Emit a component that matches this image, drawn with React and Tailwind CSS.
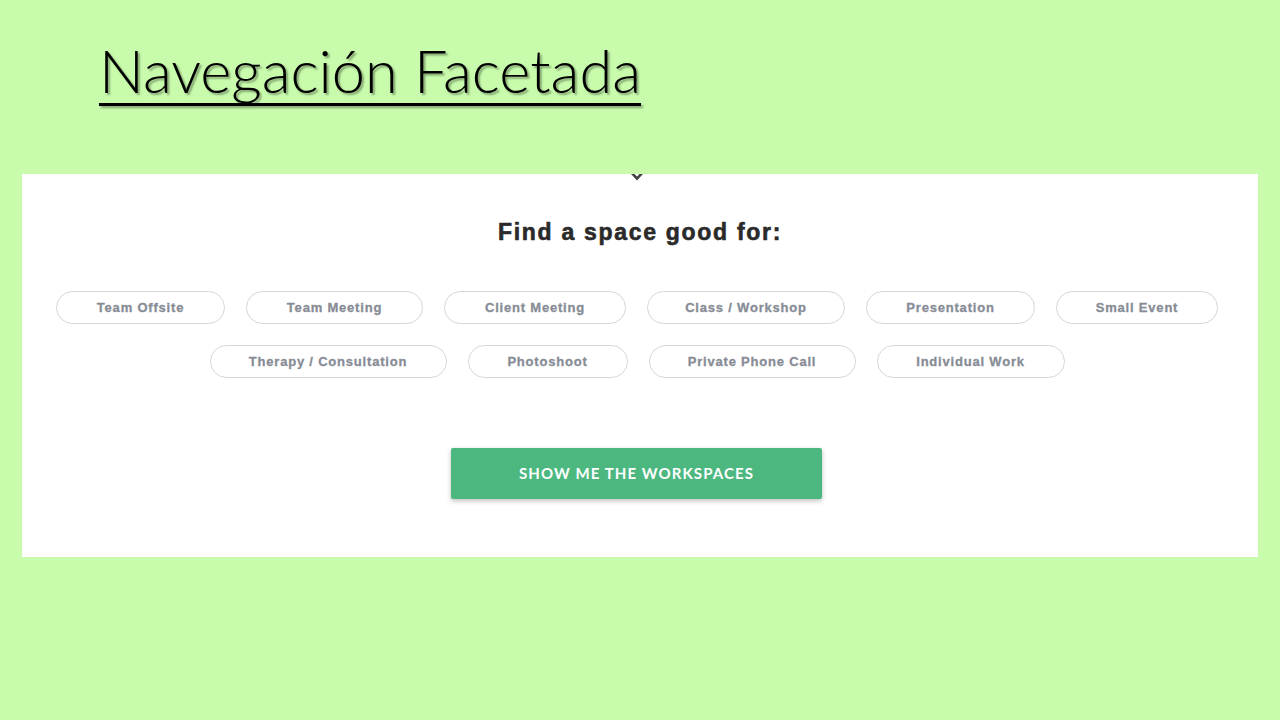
const rowOne = [
    { label: "Team Offsite", w: "w-[169px]" },
    { label: "Team Meeting", w: "w-[177px]" },
    { label: "Client Meeting", w: "w-[182px]" },
    { label: "Class / Workshop", w: "w-[198px]" },
    { label: "Presentation", w: "w-[169px]" },
    { label: "Small Event", w: "w-[162px]" },
];

const rowTwo = [
    { label: "Therapy / Consultation", w: "w-[237px]" },
    { label: "Photoshoot", w: "w-[160px]" },
    { label: "Private Phone Call", w: "w-[207px]" },
    { label: "Individual Work", w: "w-[188px]" },
];

function Pill({ label, w }) {
    return (
        <button
            className={`${w} h-[33px] rounded-full border border-[#d4d6d9] bg-white text-[13px] font-bold tracking-[0.8px] text-[#878c96] [-webkit-text-stroke:0.3px_#878c96] font-['Liberation_Sans',Arial,sans-serif]`}
        >
            {label}
        </button>
    );
}

export default function App() {
    return (
        <div className="w-[1280px] h-[720px] bg-[#c8fcac] overflow-hidden">
            {/* Slide title */}
            <div className="pl-[99px] pt-[38px] h-[174px]">
                <h1 className="inline-block font-['Lato',sans-serif] font-light text-[59.5px] leading-[64px] text-black underline decoration-[3px] underline-offset-[10px] [text-decoration-skip-ink:none] [text-shadow:2px_2px_2px_rgba(0,0,0,0.35)]">
                    Navegación Facetada
                </h1>
            </div>

            {/* Screenshot panel */}
            <div className="relative mx-[22px] w-[1236px] h-[383px] bg-white flex flex-col items-center">
                <svg className="absolute top-0 left-[609px]" width="12" height="7" viewBox="0 0 12 7">
                    <path d="M0 0 L6 6.5 L12 0 L8.5 0 L6 2.5 L3.5 0 Z" fill="#444" />
                </svg>

                <h2 className="mt-[44px] text-[23px] leading-[28px] font-bold text-[#2a2a2a] tracking-[1.7px] [-webkit-text-stroke:0.6px_#2a2a2a] font-['Liberation_Sans',Arial,sans-serif]">
                    Find a space good for:
                </h2>

                <div className="mt-[45px] flex gap-[21px] pl-[30px] pr-[36px]">
                    {rowOne.map((p) => (
                        <Pill key={p.label} {...p} />
                    ))}
                </div>
                <div className="mt-[21px] flex gap-[21px] pr-[6px]">
                    {rowTwo.map((p) => (
                        <Pill key={p.label} {...p} />
                    ))}
                </div>

                <button className="mt-[70px] -ml-[7px] w-[371px] h-[51px] rounded-[2px] bg-[#4cb880] text-white text-[15px] font-bold tracking-[1.1px] uppercase font-['Lato',sans-serif] shadow-[0_2px_5px_rgba(0,0,0,0.25)]">
                    Show me the workspaces
                </button>
            </div>
        </div>
    );
}
